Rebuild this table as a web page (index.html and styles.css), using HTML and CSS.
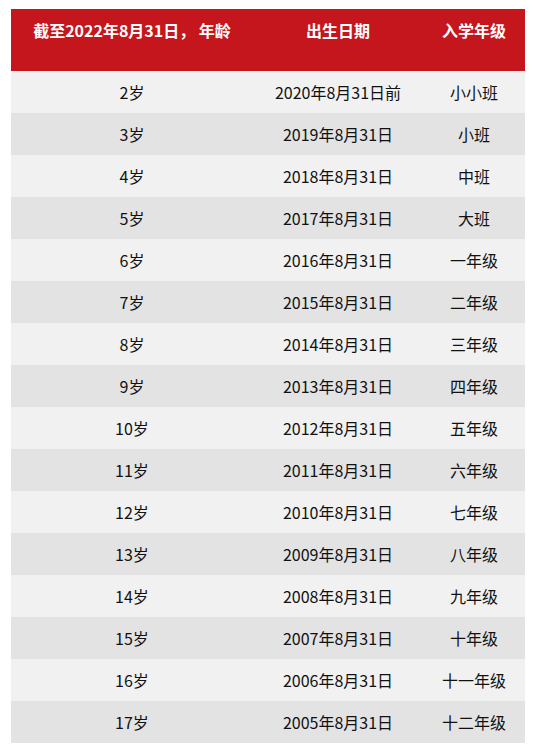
FILE: index.html
```html
<!DOCTYPE html>
<html lang="zh-CN">
<head>
<meta charset="utf-8">
<link rel="stylesheet" href="styles.css">
</head>
<body>
<table class="grade-table">
  <colgroup>
    <col class="c1"><col class="c2"><col class="c3">
  </colgroup>
  <thead>
    <tr><th>截至2022年8月31日， 年龄</th><th>出生日期</th><th>入学年级</th></tr>
  </thead>
  <tbody>
    <tr><td>2岁</td><td>2020年8月31日前</td><td>小小班</td></tr>
    <tr><td>3岁</td><td>2019年8月31日</td><td>小班</td></tr>
    <tr><td>4岁</td><td>2018年8月31日</td><td>中班</td></tr>
    <tr><td>5岁</td><td>2017年8月31日</td><td>大班</td></tr>
    <tr><td>6岁</td><td>2016年8月31日</td><td>一年级</td></tr>
    <tr><td>7岁</td><td>2015年8月31日</td><td>二年级</td></tr>
    <tr><td>8岁</td><td>2014年8月31日</td><td>三年级</td></tr>
    <tr><td>9岁</td><td>2013年8月31日</td><td>四年级</td></tr>
    <tr><td>10岁</td><td>2012年8月31日</td><td>五年级</td></tr>
    <tr><td>11岁</td><td>2011年8月31日</td><td>六年级</td></tr>
    <tr><td>12岁</td><td>2010年8月31日</td><td>七年级</td></tr>
    <tr><td>13岁</td><td>2009年8月31日</td><td>八年级</td></tr>
    <tr><td>14岁</td><td>2008年8月31日</td><td>九年级</td></tr>
    <tr><td>15岁</td><td>2007年8月31日</td><td>十年级</td></tr>
    <tr><td>16岁</td><td>2006年8月31日</td><td>十一年级</td></tr>
    <tr><td>17岁</td><td>2005年8月31日</td><td>十二年级</td></tr>
  </tbody>
</table>
</body>
</html>
```
FILE: styles.css
```css
html, body {
  margin: 0;
  padding: 0;
  background: #ffffff;
}
body {
  padding: 9px 8px 0 11px;
  font-family: "Noto Sans CJK SC", "Noto Sans", sans-serif;
  color: #111111;
}
.grade-table {
  width: 514px;
  border-collapse: collapse;
  table-layout: fixed;
}
.c1 { width: 242px; }
.c2 { width: 170px; }
.c3 { width: 102px; }
.grade-table th {
  background: #c4161c;
  color: #ffffff;
  font-size: 16px;
  font-weight: bold;
  line-height: 24px;
  height: 62px;
  box-sizing: border-box;
  padding: 9px 0 29px;
  vertical-align: top;
  text-align: center;
  white-space: pre;
}
.grade-table td {
  height: 42px;
  box-sizing: border-box;
  padding: 0;
  font-size: 16px;
  line-height: 24px;
  text-align: center;
  vertical-align: middle;
  white-space: nowrap;
}
.grade-table tbody tr:nth-child(odd) td { background: #f1f1f1; }
.grade-table tbody tr:nth-child(even) td { background: #e3e3e3; }
```
